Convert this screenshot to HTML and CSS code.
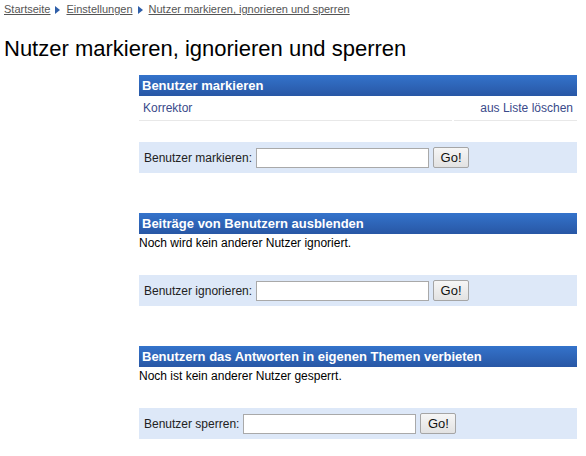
FILE: index.html
```html
<!DOCTYPE html>
<html lang="de">
<head>
<meta charset="utf-8">
<title>Nutzer markieren, ignorieren und sperren</title>
<link rel="stylesheet" href="styles.css">
</head>
<body>
<div class="crumbs">
  <a href="#">Startseite</a><span class="arrow"></span><a href="#">Einstellungen</a><span class="arrow"></span><a href="#">Nutzer markieren, ignorieren und sperren</a>
</div>
<h1 class="title">Nutzer markieren, ignorieren und sperren</h1>
<div class="content">
  <section class="block">
    <h2 class="head">Benutzer markieren</h2>
    <div class="row">
      <div class="cell cell-main"><a href="#" class="link">Korrektor</a></div>
      <div class="cell cell-action"><a href="#" class="link">aus Liste löschen</a></div>
    </div>
    <form class="form form-first">
      <label class="label">Benutzer markieren:</label>
      <input class="field" type="text">
      <button class="go" type="button">Go!</button>
    </form>
  </section>
  <section class="block">
    <h2 class="head">Beiträge von Benutzern ausblenden</h2>
    <p class="note">Noch wird kein anderer Nutzer ignoriert.</p>
    <form class="form">
      <label class="label">Benutzer ignorieren:</label>
      <input class="field" type="text">
      <button class="go" type="button">Go!</button>
    </form>
  </section>
  <section class="block">
    <h2 class="head">Benutzern das Antworten in eigenen Themen verbieten</h2>
    <p class="note">Noch ist kein anderer Nutzer gesperrt.</p>
    <form class="form">
      <label class="label">Benutzer sperren:</label>
      <input class="field" type="text">
      <button class="go" type="button">Go!</button>
    </form>
  </section>
</div>
</body>
</html>
```
FILE: styles.css
```css
* { box-sizing: border-box; }
html, body { overflow: hidden; }
body {
  margin: 0;
  padding: 3px 4px 0 4px;
  font-family: "Liberation Sans", Arial, sans-serif;
  color: #000;
  background: #fff;
}
.crumbs {
  font-size: 11px;
  line-height: 13px;
  display: flex;
  align-items: center;
  height: 13px;
}
.crumbs a {
  color: #555;
  text-decoration: underline;
}
.arrow {
  display: inline-block;
  width: 0;
  height: 0;
  border-top: 4px solid transparent;
  border-bottom: 4px solid transparent;
  border-left: 5px solid #2f5fa9;
  margin: 0 6px 0 5px;
}
.title {
  font-size: 22px;
  font-weight: normal;
  line-height: 24px;
  margin: 21px 0 0 0;
}
.content {
  margin: 14px 5px 0 135px;
}
.block { margin-bottom: 40px; }
.block:last-child { margin-bottom: 0; }
.head {
  margin: 0;
  height: 21px;
  line-height: 21px;
  font-size: 13px;
  font-weight: bold;
  color: #fff;
  padding-left: 3px;
  background: linear-gradient(#3473cb, #2857a5);
}
.row {
  display: flex;
  height: 25px;
  font-size: 12px;
}
.cell {
  display: flex;
  align-items: center;
  border-bottom: 1px solid #e8e8e8;
}
.cell-main { flex: 1; padding-left: 4px; margin-right: 2px; }
.cell-action { padding-right: 4px; padding-left: 26px; }
.link { color: #3a4a8a; text-decoration: none; }
.note {
  margin: 0;
  font-size: 12px;
  line-height: 16px;
  padding-top: 1px;
}
.form {
  display: flex;
  align-items: center;
  height: 31px;
  margin-top: 24px;
  padding-left: 5px;
  background: #dde8f8;
  font-size: 12px;
}
.form-first { margin-top: 21px; }
.label { color: #222; margin-right: 4px; }
.field {
  width: 173px;
  height: 20px;
  border: 1px solid #a9a9a9;
  background: #fff;
  margin: 0 4px 0 0;
  padding: 0;
}
.go {
  width: 36px;
  height: 21px;
  font-family: "Liberation Sans", Arial, sans-serif;
  font-size: 13px;
  color: #111;
  background: linear-gradient(#f6f6f6, #e2e2e2);
  border: 1px solid #a5a5a5;
  border-radius: 2px;
  padding: 0;
}
```
